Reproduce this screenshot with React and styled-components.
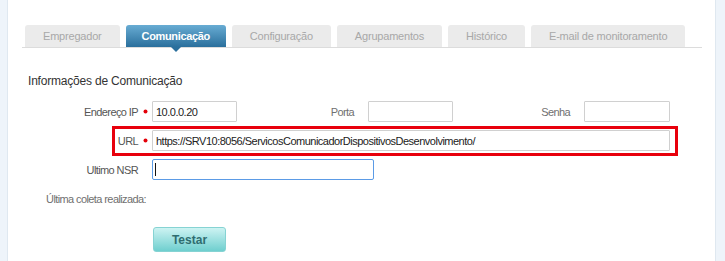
import React from 'react';
import styled, { createGlobalStyle } from 'styled-components';

const GlobalStyle = createGlobalStyle`
  body {
    margin: 0;
    background: #fff;
    font-family: "Liberation Sans", Arial, sans-serif;
  }
`;

const tabs = [
  'Empregador',
  'Comunicação',
  'Configuração',
  'Agrupamentos',
  'Histórico',
  'E-mail de monitoramento',
];

const App = () => {
  return (
    <Page>
      <GlobalStyle />
      <SideStrip />
      <Panel>
        <TabBar>
          {tabs.map((t) => (
            <Tab key={t} $active={t === 'Comunicação'}>
              {t}
            </Tab>
          ))}
        </TabBar>
        <Content>
          <Heading>Informações de Comunicação</Heading>
          <Form>
            <Row>
              <Label>Endereço IP</Label>
              <Dot />
              <Input $width={85} defaultValue="10.0.0.20" readOnly />
              <SideLabel>Porta</SideLabel>
              <Input $width={85} defaultValue="" readOnly />
              <SideLabel>Senha</SideLabel>
              <Input $width={86} defaultValue="" readOnly />
            </Row>
            <Row $highlighted>
              <Label>URL</Label>
              <Dot />
              <Input
                $width={518}
                defaultValue="https://SRV10:8056/ServicosComunicadorDispositivosDesenvolvimento/"
                readOnly
              />
            </Row>
            <Row>
              <Label>Ultimo NSR</Label>
              <Dot $invisible />
              <InputWrap>
                <Input $width={222} $focused defaultValue="" readOnly />
                <Caret />
              </InputWrap>
            </Row>
            <Row>
              <Label $wide $muted>
                Última coleta realizada:
              </Label>
            </Row>
          </Form>
          <TestButton>Testar</TestButton>
        </Content>
      </Panel>
      <SideStrip $right />
    </Page>
  );
};

export default App;

const Page = styled.div`
  display: flex;
  width: 725px;
  height: 261px;
  overflow: hidden;
`;

const SideStrip = styled.div`
  width: ${(p) => (p.$right ? '9px' : '7px')};
  flex-shrink: 0;
  background: #eef4fa;
  border-${(p) => (p.$right ? 'left' : 'right')}: 1px solid #dfe8f0;
`;

const Panel = styled.div`
  flex: 1;
  padding-top: 25px;
  background: #fff;
`;

const TabBar = styled.div`
  display: flex;
  gap: 6px;
  margin-left: 14px;
  padding-left: 3px;
  width: 677px;
  border-bottom: 1px solid #dcdcdc;
`;

const Tab = styled.div`
  position: relative;
  height: 22px;
  padding: 0 ${(p) => (p.$active ? '16px' : '18px')};
  display: flex;
  align-items: center;
  justify-content: center;
  border-radius: 3px 3px 0 0;
  font-size: 11px;
  letter-spacing: ${(p) => (p.$active ? '-0.35px' : '-0.2px')};
  font-weight: ${(p) => (p.$active ? 'bold' : 'normal')};
  color: ${(p) => (p.$active ? '#fff' : '#a8a8a8')};
  background: ${(p) =>
    p.$active ? 'linear-gradient(#68acd3, #2a6f9c)' : '#ebebeb'};

  &::after {
    content: '';
    display: ${(p) => (p.$active ? 'block' : 'none')};
    position: absolute;
    left: 50%;
    bottom: -5px;
    margin-left: -5px;
    border-left: 5px solid transparent;
    border-right: 5px solid transparent;
    border-top: 5px solid #2a6f9c;
  }
`;

const Content = styled.div`
  padding: 26px 0 0 20px;
`;

const Heading = styled.h3`
  margin: 0 0 13px;
  font-size: 12px;
  line-height: 14px;
  letter-spacing: -0.2px;
  font-weight: normal;
  color: #333;
`;

const Form = styled.div`
  display: flex;
  flex-direction: column;
  gap: 8px;
`;

const Row = styled.div`
  position: relative;
  display: flex;
  align-items: center;
  height: 21px;
  width: fit-content;

  &::before {
    content: '';
    display: ${(p) => (p.$highlighted ? 'block' : 'none')};
    position: absolute;
    left: 84px;
    top: -4px;
    right: -8px;
    bottom: -5px;
    border: 3px solid #e8000c;
    box-sizing: border-box;
  }
`;

const Label = styled.div`
  width: ${(p) => (p.$wide ? '118px' : '110px')};
  text-align: right;
  font-size: 11px;
  letter-spacing: -0.6px;
  color: ${(p) => (p.$muted ? '#707070' : '#555')};
`;

const SideLabel = styled(Label)`
  width: 117px;
  margin-right: 14px;
  color: #707070;
`;

const Dot = styled.span`
  width: 3px;
  height: 3px;
  margin: 0 5px 0 6px;
  border-radius: 50%;
  background: #e3000a;
  box-shadow: 0 0 0 0.5px #e3000a;
  visibility: ${(p) => (p.$invisible ? 'hidden' : 'visible')};
`;

const InputWrap = styled.div`
  position: relative;
  display: flex;
`;

const Input = styled.input`
  box-sizing: border-box;
  width: ${(p) => p.$width}px;
  height: 21px;
  padding: 0 3px;
  font-family: "Liberation Sans", Arial, sans-serif;
  font-size: 11px;
  letter-spacing: -0.5px;
  color: #222;
  background: #fff;
  border: 1px solid ${(p) => (p.$focused ? '#5b9be6' : '#d0d0d0')};
  border-radius: ${(p) => (p.$focused ? '2px' : '1px')};
  outline: none;
`;

const Caret = styled.span`
  position: absolute;
  left: 3px;
  top: 4px;
  width: 1px;
  height: 13px;
  background: #111;
`;

const TestButton = styled.button`
  margin: 18px 0 0 125px;
  width: 73px;
  height: 25px;
  border: 1px solid #86d3d3;
  border-radius: 3px;
  background: linear-gradient(#cdf3f2, #6fcfcf);
  font-family: "Liberation Sans", Arial, sans-serif;
  font-size: 12px;
  font-weight: bold;
  color: #2f6d70;
  cursor: pointer;
`;
